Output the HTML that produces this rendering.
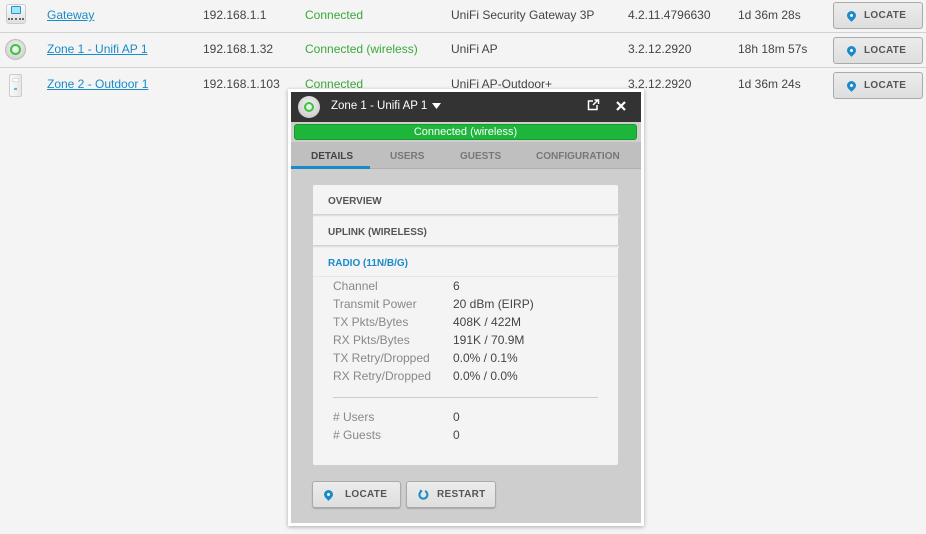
<!DOCTYPE html>
<html><head><meta charset="utf-8"><style>
*{margin:0;padding:0;box-sizing:border-box}
body{width:926px;height:534px;background:#f4f4f4;font-family:"Liberation Sans",sans-serif;font-size:12px;color:#444;position:relative;overflow:hidden}
.a{position:absolute;white-space:nowrap}
.sep{position:absolute;left:0;width:926px;height:1px;background:#d2d2d2}
.lnk{color:#1a8bc8;text-decoration:underline}
.grn{color:#3aa83a}
.btn{position:absolute;border:1px solid #aaa;border-radius:3px;background:linear-gradient(#ececec,#dedede);font-weight:bold;font-size:10px;color:#555;letter-spacing:.3px}
.pin{position:absolute;width:9px;height:9px;background:#1a8bc8;border-radius:50% 50% 50% 0;transform:rotate(-45deg)}
.pin:after{content:"";position:absolute;left:3px;top:3px;width:3px;height:3px;background:#fff;border-radius:50%}
.lab{color:#888}
.hd{font-weight:bold;font-size:10px;color:#555}
</style></head><body>
<div class="a" style="left:6px;top:4px;width:20px;height:20px;background:linear-gradient(#fafafa,#e0e0e0);border:1px solid #ccc;border-radius:3px"></div>
<div class="a" style="left:11px;top:6px;width:10px;height:8px;border:1.5px solid #1a9bd0;background:#aee0f4;border-radius:1px"></div>
<div class="a" style="left:8px;top:18px;width:16px;height:2px;border-top:2px dotted #666"></div>
<div class="a" style="left:5px;top:39px;width:21px;height:21px;border-radius:50%;background:radial-gradient(circle at 50% 40%,#f4f4f4,#c8c8c8);border:1px solid #bbb"></div>
<div class="a" style="left:10px;top:44px;width:11px;height:11px;border-radius:50%;border:2.5px solid #3cc63c"></div>
<div class="a" style="left:9px;top:74px;width:13px;height:23px;background:linear-gradient(90deg,#fafafa,#e6e6e6);border:1px solid #ccc;border-radius:2px"></div>
<div class="a" style="left:12px;top:78px;width:7px;height:4px;background:#fff;border:1px solid #ddd"></div>
<div class="a" style="left:14px;top:88px;width:3px;height:2px;background:#6ab4e0"></div>

<div class="sep" style="top:32px"></div>
<div class="sep" style="top:67px"></div>

<div class="a lnk" style="left:47px;top:8px">Gateway</div>
<div class="a lnk" style="left:47px;top:42px">Zone 1 - Unifi AP 1</div>
<div class="a lnk" style="left:47px;top:77px">Zone 2 - Outdoor 1</div>
<div class="a" style="left:203px;top:8px">192.168.1.1</div>
<div class="a" style="left:203px;top:42px">192.168.1.32</div>
<div class="a" style="left:203px;top:77px">192.168.1.103</div>
<div class="a grn" style="left:305px;top:8px">Connected</div>
<div class="a grn" style="left:305px;top:42px">Connected (wireless)</div>
<div class="a grn" style="left:305px;top:77px">Connected</div>
<div class="a" style="left:451px;top:8px">UniFi Security Gateway 3P</div>
<div class="a" style="left:451px;top:42px">UniFi AP</div>
<div class="a" style="left:451px;top:77px">UniFi AP-Outdoor+</div>
<div class="a" style="left:628px;top:8px">4.2.11.4796630</div>
<div class="a" style="left:628px;top:42px">3.2.12.2920</div>
<div class="a" style="left:628px;top:77px">3.2.12.2920</div>
<div class="a" style="left:738px;top:8px">1d 36m 28s</div>
<div class="a" style="left:738px;top:42px">18h 18m 57s</div>
<div class="a" style="left:738px;top:77px">1d 36m 24s</div>

<div class="btn" style="left:833px;top:2px;width:90px;height:27px"><div class="pin" style="left:13px;top:8px"></div><span class="a" style="left:30px;top:7px">LOCATE</span></div>
<div class="btn" style="left:833px;top:37px;width:90px;height:27px"><div class="pin" style="left:13px;top:8px"></div><span class="a" style="left:30px;top:7px">LOCATE</span></div>
<div class="btn" style="left:833px;top:72px;width:90px;height:27px"><div class="pin" style="left:13px;top:8px"></div><span class="a" style="left:30px;top:7px">LOCATE</span></div>

<div class="a" style="left:288px;top:89px;width:356px;height:437px;background:#fff;box-shadow:0 1px 4px rgba(0,0,0,.3)"></div>
<div class="a" style="left:291px;top:92px;width:350px;height:431px;background:#cecece"></div>
<div class="a" style="left:291px;top:92px;width:350px;height:30px;background:#333"></div>
<div class="a" style="left:298px;top:96px;width:22px;height:22px;border-radius:50%;background:radial-gradient(circle at 50% 40%,#f4f4f4,#c0c0c0)"></div>
<div class="a" style="left:304px;top:102px;width:10px;height:10px;border-radius:50%;border:2px solid #3cc63c"></div>
<div class="a" style="left:331px;top:100px;color:#fff;font-size:11.5px">Zone 1 - Unifi AP 1</div>
<svg class="a" style="left:432px;top:103px" width="9" height="7"><path d="M0 0H9L4.5 6Z" fill="#fff"/></svg>
<svg class="a" style="left:587px;top:99px" width="13" height="12" viewBox="0 0 13 12"><path d="M6 2H1.5v8.5H10V6" fill="none" stroke="#fff" stroke-width="1.5"/><path d="M6 6L11 1M7.5 1H11.5V5" fill="none" stroke="#fff" stroke-width="1.5"/></svg>
<svg class="a" style="left:616px;top:101px" width="10" height="10"><path d="M1 1L9 9M9 1L1 9" stroke="#fff" stroke-width="2.2"/></svg>
<div class="a" style="left:294px;top:124px;width:343px;height:16px;background:#1db53a;border-radius:3px;border:1px solid #159a2c;color:#fff;font-size:11px;text-align:center;line-height:14px">Connected (wireless)</div>
<div class="a" style="left:291px;top:142px;width:350px;height:27px;background:#bfbfbf;border-bottom:1px solid #b0b0b0"></div>
<div class="a" style="left:291px;top:166px;width:79px;height:3px;background:#1a8bc8"></div>
<div class="a hd" style="left:311px;top:151px;color:#444">DETAILS</div>
<div class="a hd" style="left:390px;top:151px;color:#777">USERS</div>
<div class="a hd" style="left:460px;top:151px;color:#777">GUESTS</div>
<div class="a hd" style="left:536px;top:151px;color:#777">CONFIGURATION</div>

<div class="a" style="left:313px;top:185px;width:305px;height:280px;background:#f4f4f4;border-radius:2px"></div>
<div class="a" style="left:313px;top:214px;width:306px;height:3px;background:linear-gradient(#ccc,#f4f4f4)"></div>
<div class="a" style="left:313px;top:245px;width:306px;height:3px;background:linear-gradient(#ccc,#f4f4f4)"></div>
<div class="a hd" style="left:328px;top:196px">OVERVIEW</div>
<div class="a hd" style="left:328px;top:227px">UPLINK (WIRELESS)</div>
<div class="a hd" style="left:328px;top:258px;color:#1a8bc8">RADIO (11N/B/G)</div>
<div class="a" style="left:313px;top:276px;width:305px;height:1px;background:#e6e6e6"></div>

<div class="a lab" style="left:333px;top:279px">Channel</div><div class="a" style="left:453px;top:279px">6</div>
<div class="a lab" style="left:333px;top:297px">Transmit Power</div><div class="a" style="left:453px;top:297px">20 dBm (EIRP)</div>
<div class="a lab" style="left:333px;top:315px">TX Pkts/Bytes</div><div class="a" style="left:453px;top:315px">408K / 422M</div>
<div class="a lab" style="left:333px;top:333px">RX Pkts/Bytes</div><div class="a" style="left:453px;top:333px">191K / 70.9M</div>
<div class="a lab" style="left:333px;top:351px">TX Retry/Dropped</div><div class="a" style="left:453px;top:351px">0.0% / 0.1%</div>
<div class="a lab" style="left:333px;top:369px">RX Retry/Dropped</div><div class="a" style="left:453px;top:369px">0.0% / 0.0%</div>
<div class="a" style="left:333px;top:397px;width:265px;height:1px;background:#ccc"></div>
<div class="a lab" style="left:333px;top:410px"># Users</div><div class="a" style="left:453px;top:410px">0</div>
<div class="a lab" style="left:333px;top:428px"># Guests</div><div class="a" style="left:453px;top:428px">0</div>

<div class="btn" style="left:312px;top:481px;width:89px;height:27px;box-shadow:0 1px 1px rgba(0,0,0,.2)"><div class="pin" style="left:11px;top:8px"></div><span class="a" style="left:32px;top:7px">LOCATE</span></div>
<div class="btn" style="left:406px;top:481px;width:90px;height:27px;box-shadow:0 1px 1px rgba(0,0,0,.2)"><svg class="a" style="left:11px;top:7px" width="11" height="11" viewBox="0 0 11 11"><path d="M3 2.5A4 4 0 1 0 7 2" fill="none" stroke="#1a8bc8" stroke-width="2"/><path d="M1.5 0.5L4.5 1.5L3 4.5" fill="#1a8bc8"/></svg><span class="a" style="left:30px;top:7px">RESTART</span></div>
</body></html>
